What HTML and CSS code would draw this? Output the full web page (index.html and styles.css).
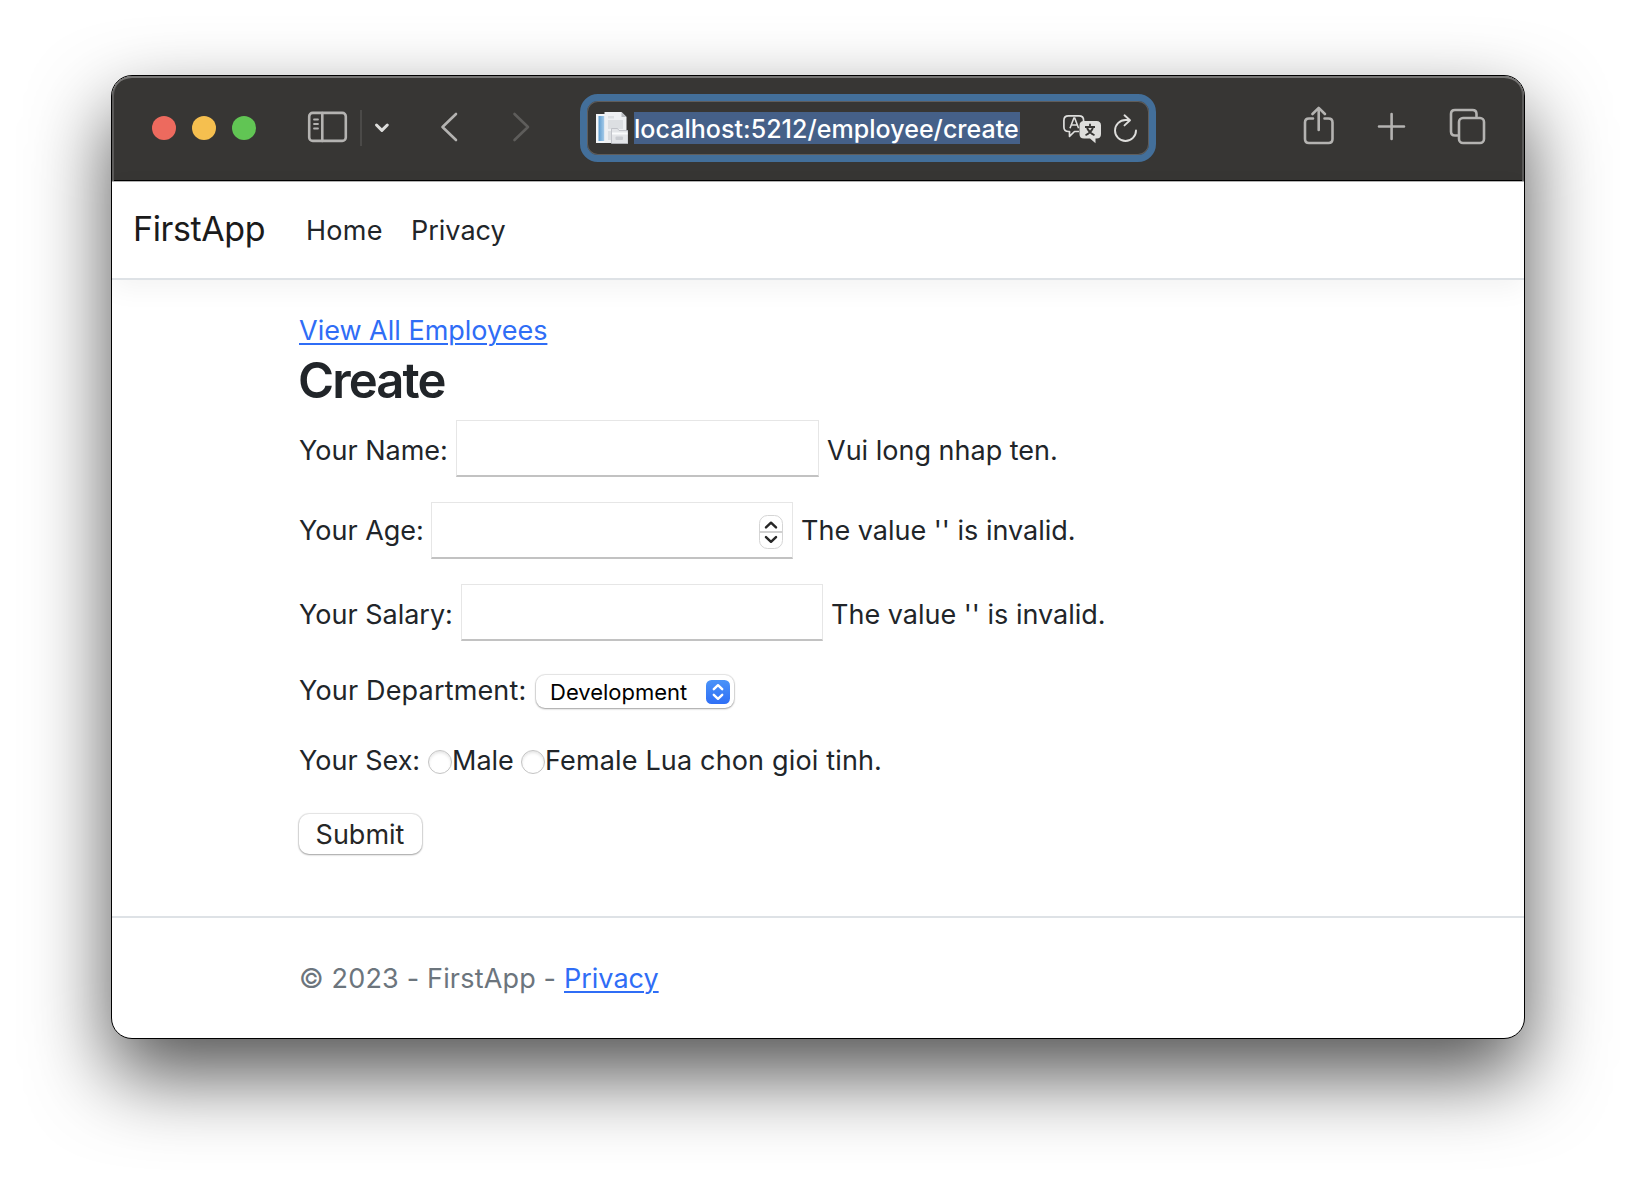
FILE: index.html
```html
<!DOCTYPE html>
<html lang="en">
<head>
<meta charset="utf-8">
<title>Create - FirstApp</title>
<link rel="stylesheet" href="styles.css">
</head>
<body>
<div class="window">
  <div class="toolbar">
    <div class="lights"><i class="light red"></i><i class="light yellow"></i><i class="light green"></i></div>
    <svg class="icon sidebar" width="48" height="44" viewBox="304 106 48 44"><rect x="309.2" y="112.9" width="36.6" height="28" rx="3.5"/><path d="M322.3 113v28"/><path class="thin" d="M314 119.5h4M314 124h4M314 128.500h4"/></svg>
    <svg class="icon menu" width="38" height="44" viewBox="356 106 38 44"><path class="rule" d="M361 110v36"/><path class="bright" d="M376.500 125l5.400 5.400l5.400-5.400"/></svg>
    <svg class="icon back" width="26" height="44" viewBox="436 106 26 44"><path d="M456 114l-13.500 13l13.500 13"/></svg>
    <svg class="icon forward" width="26" height="44" viewBox="508 106 26 44"><path d="M514.500 114l13.500 13l-13.500 13"/></svg>
    <div class="address">
      <svg width="33" height="34" viewBox="595 111 33 34">
        <defs><linearGradient id="b" x1="0" y1="0" x2="1" y2="0"><stop offset="0" stop-color="#5d9ccf"/><stop offset="1" stop-color="#a8cdea"/></linearGradient></defs>
        <path fill="#f4f6f8" d="M596 114h12v29h-12z"/><path fill="url(#b)" d="M598.500 116h6v25h-6z"/>
        <path fill="#eef0f2" d="M604.500 112h17l5 5v26h-22z"/><path fill="#b9bcc0" d="M621.500 112v5h5z"/>
        <path fill="#dcdfe2" d="M608 116h6v2.500h-6zM608 120h15v9h-15zM608 131h3v9h-3z"/>
        <path fill="#e3e5e8" stroke="#b7bac0" stroke-width=".8" d="M611.500 128.500h6l1.500 2h9v13h-16.500z"/><path fill="#fafbfc" d="M612 132.500h15.500v2h-15.500z"/><rect x="615.500" y="136.500" width="7.500" height="3.500" rx="1" fill="#c9ccd1"/>
      </svg>
      <span class="url">localhost:5212/employee/create</span>
      <svg class="translate" width="42" height="34" viewBox="1061 111 42 34">
        <path fill="none" stroke="#dededc" stroke-width="1.700" stroke-linejoin="round" d="M1079 131.500h-4.500l-5 4.800v-4.800h-1q-4.600 0-4.600-4.600v-6.400q0-4.600 4.600-4.600h10.500q4.600 0 4.600 4.600v1.500"/>
        <path fill="none" stroke="#dededc" stroke-width="1.600" d="M1070 128.300l3.900-10.300h.8l3.900 10.300M1071.500 125h5.500"/>
        <path fill="#dededc" d="M1084 121h12.500q4.500 0 4.500 4.500v8.500q0 4.500-4.500 4.500h-1v4.800l-5.500-4.800h-6q-4.500 0-4.500-4.500v-8.500q0-4.500 4.500-4.500z"/>
        <path fill="none" stroke="#373634" stroke-width="1.800" d="M1090 123.800v3M1085 127h10M1087 128q2.500 5 7.500 7.300M1093 128q-2.500 5-7.500 7.300"/>
      </svg>
      <svg class="reload" width="28" height="34" viewBox="1112 111 28 34"><path fill="none" stroke="#dededc" stroke-width="1.900" stroke-linecap="round" stroke-linejoin="round" d="M1136 130.500a10.500 10.500 0 1 1-10.500-10.500h4M1124.500 115.300l5.500 4.900l-5.500 5.200"/></svg>
    </div>
    <svg class="icon share" width="42" height="44" viewBox="1298 106 42 44"><path d="M1313 118.500h-4q-4 0-4 4v16.500q0 4 4 4h19.500q4 0 4-4v-16.500q0-4-4-4h-4"/><path d="M1318.700 130v-21.500M1312.500 114l6.200-6.200l6.200 6.200"/></svg>
    <svg class="icon plus" width="36" height="44" viewBox="1374 106 36 44"><path d="M1379 126.500h25M1391.600 114v25"/></svg>
    <svg class="icon tabs" width="44" height="44" viewBox="1446 106 44 44"><path d="M1457.500 135.500h-2.500q-4 0-4-4v-17.500q0-4 4-4h17.500q4 0 4 4v2.500"/><rect x="1459" y="118" width="25" height="25" rx="4"/></svg>
  </div>
  <header class="navbar">
    <a class="brand">FirstApp</a><a class="home">Home</a><a class="priv">Privacy</a>
  </header>
  <main>
    <a class="link all">View All Employees</a>
    <h1>Create</h1>
    <form>
      <div class="row name"><label class="t">Your Name:</label><div class="field"></div><span class="t">Vui long nhap ten.</span></div>
      <div class="row age"><label class="t">Your Age:</label><div class="field"><svg class="stepper" width="28" height="38" viewBox="0 0 28 38"><rect x="2.500" y="2.500" width="23" height="33" rx="8" fill="#fff" stroke="#d5d5d5"/><path d="M2.500 19h23" stroke="#d0d0d0" stroke-width="2"/><path d="M9 14.300l5-4.600l5 4.600M9 24.200l5 4.600l5-4.600" fill="none" stroke="#262626" stroke-width="2.500" stroke-linecap="round" stroke-linejoin="round"/></svg></div><span class="t">The value '' is invalid.</span></div>
      <div class="row salary"><label class="t">Your Salary:</label><div class="field"></div><span class="t">The value '' is invalid.</span></div>
      <div class="row dept"><label class="t">Your Department:</label><div class="select"><span>Development</span><svg width="24" height="24" viewBox="0 0 24 24"><defs><linearGradient id="s" x1="0" y1="0" x2="0" y2="1"><stop offset="0" stop-color="#4a93f8"/><stop offset="1" stop-color="#2f6ff6"/></linearGradient></defs><rect width="24" height="24" rx="5.500" fill="url(#s)"/><path d="M7.800 9.200l4.200-4l4.200 4M7.800 14.800l4.200 4l4.200-4" fill="none" stroke="#fff" stroke-width="2.400" stroke-linecap="round" stroke-linejoin="round"/></svg></div></div>
      <div class="row sex"><label class="t">Your Sex:</label><i class="radio"></i><span class="t male">Male</span><i class="radio"></i><span class="t female">Female Lua chon gioi tinh.</span></div>
      <button class="submit" type="button">Submit</button>
    </form>
  </main>
  <footer><span>© 2023 - FirstApp -</span><a class="link">Privacy</a></footer>
</div>
</body>
</html>
```
FILE: styles.css
```css
* { box-sizing: border-box; }
body { margin: 0; width: 1636px; height: 1186px; overflow: hidden; background: #fff; color: #212529; font: 27px/40px Inter, "Liberation Sans", sans-serif; }
.window { width: 1414px; height: 964px; margin: 75px 0 0 111px; border: 1px solid #000; border-radius: 21px; background: #fff; overflow: hidden; box-shadow: 0 36px 80px rgba(0,0,0,.68); display: flex; flex-direction: column; }
.toolbar { height: 106px; flex: none; display: flex; align-items: center; padding: 0 0 2px 40px; background: #373634; border-bottom: 1px solid #b5b5b5; border-radius: 20px 20px 0 0; box-shadow: inset 0 2px #777675, inset 2px 0 #5b5a59, inset -2px 0 #5b5a59, inset 0 -1px #000; }
.lights { display: flex; gap: 16px; }
.light { width: 24px; height: 24px; border-radius: 50%; }
.red { background: #ed6a5e; }
.yellow { background: #f5bf4f; }
.green { background: #61c554; }
.icon { fill: none; stroke: #b4b3b1; stroke-width: 2.6; stroke-linecap: round; stroke-linejoin: round; flex: none; }
.icon .thin { stroke-width: 1.8; }
.icon .rule { stroke: #4b4a48; stroke-width: 2; stroke-linecap: butt; }
.icon .bright { stroke: #dddddb; stroke-width: 3; }
.sidebar { margin-left: 48px; }
.menu { margin-left: 4px; }
.back { margin-left: 42px; }
.forward { margin-left: 46px; stroke: #5e5d5b; }
.address { width: 576px; height: 68px; margin-left: 46px; border: 7px solid #436f9a; border-radius: 18px; padding-left: 8px; display: flex; align-items: center; box-shadow: inset 0 0 0 1px #5f5d5b; }
.url { width: 386px; margin-left: 6px; height: 32px; line-height: 34px; font-size: 25px; font-weight: 500; letter-spacing: .04px; color: #fff; background: #456088; white-space: nowrap; }
.translate { margin-left: 41px; }
.reload { margin-left: 9px; }
.share { margin-left: 142px; }
.plus { margin-left: 34px; }
.tabs { margin-left: 36px; }
.navbar { height: 98px; flex: none; display: flex; line-height: 98px; border-bottom: 2px solid #dee2e6; box-shadow: 0 8px 26px rgba(0,0,0,.05); white-space: nowrap; }
.brand { width: 173px; padding-left: 21px; font-size: 34px; line-height: 94px; letter-spacing: -.4px; color: #1b1b1b; }
.home { width: 104px; padding-left: 21px; letter-spacing: .3px; }
.priv { padding-left: 22px; }
main { height: 636px; padding: 31px 0 0 187px; }
.all { display: block; }
.link { color: #2f6df6; text-decoration: underline; text-decoration-thickness: 2px; text-underline-offset: 3px; }
h1 { margin: 0 0 9px; font-size: 49px; line-height: 60px; font-weight: 600; letter-spacing: -1.9px; text-indent: -1px; }
.row { display: flex; align-items: flex-start; height: 57px; margin-bottom: 25px; white-space: nowrap; }
.field { flex: none; width: 362px; height: 57px; padding: 10px 7px; border: 1px solid #e6e6e6; border-bottom: 2px solid #c2c2c2; text-align: right; line-height: 0; }
.name .field { width: 363px; }
.t { flex: none; }
.name .t, .salary .t { margin-top: 11px; }
.age .t { margin-top: 9px; }
.field + .t { margin-left: 8px; }
.name label { width: 157px; }
.age label { width: 132px; }
.salary label { width: 162px; }
.dept { height: 40px; margin: 30px 0 30px; }
.dept label { width: 237px; letter-spacing: .17px; }
.select { width: 198px; height: 33px; margin-top: 4px; padding: 0 4px 0 14px; display: flex; align-items: center; justify-content: space-between; font-size: 22px; color: #000; border-radius: 9px; box-shadow: 0 0 1px 1px rgba(0,0,0,.1), 0 1px 2px rgba(0,0,0,.3); }
.sex { height: 40px; margin-bottom: 33px; }
.sex label { width: 129px; }
.radio { flex: none; width: 24px; height: 24px; margin-top: 9px; border: 1px solid #c4c4c4; border-radius: 50%; box-shadow: inset 0 2px 3px rgba(0,0,0,.1); }
.male { width: 69px; }
.female { letter-spacing: .16px; }
.submit { display: block; width: 123px; height: 40px; padding: 1px 1px 0 0; margin: 0; border: 0; border-radius: 10px; background: #fff; color: #262626; font: 27px/40px Inter, sans-serif; box-shadow: 0 0 1px 1px rgba(0,0,0,.1), 0 1px 2px rgba(0,0,0,.3); }
footer { height: 122px; flex: none; display: flex; padding: 41px 0 0 187px; border-top: 2px solid #dee2e6; color: #6c757d; white-space: nowrap; }
footer span { width: 265px; letter-spacing: .17px; }
```
